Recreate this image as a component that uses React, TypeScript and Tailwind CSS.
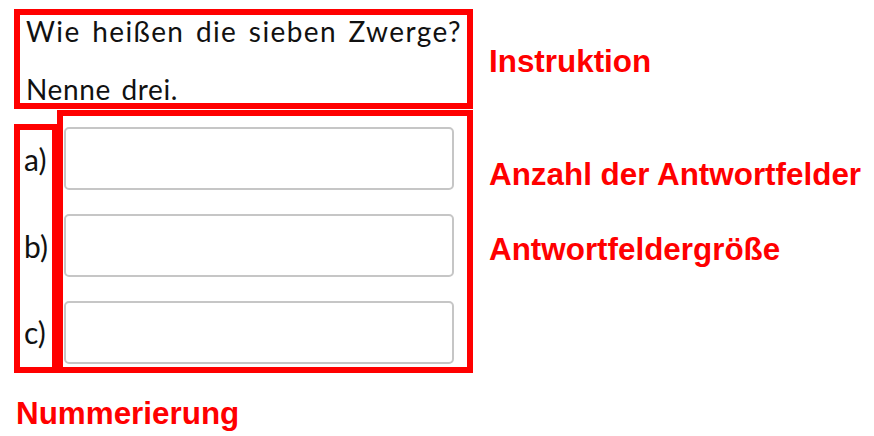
export default function App() {
  const rows = ["a)", "b)", "c)"];
  return (
    <div className="w-[874px] h-[436px] bg-white pl-[14px] pt-[9px] overflow-hidden">
      <div className="flex">
        <div className="w-[459px] flex flex-col">
          <div className="h-[100px] border-[6px] border-[#ff0000] pl-[6px] pt-[2px] text-[28px] leading-[28px] text-[#111111] whitespace-nowrap" style={{ fontFamily: "Lato, 'Noto Sans', sans-serif" }}>
            <p className="tracking-[1.4px] [word-spacing:3px]">Wie heißen die sieben Zwerge?</p>
            <p className="mt-[30px] tracking-[0.6px] [word-spacing:3px]">Nenne drei.</p>
          </div>
          <div className="flex items-end mt-[1px]">
            <div className="w-[44px] h-[249px] border-[6px] border-[#ff0000] flex flex-col justify-end gap-[24px] pb-[2px] pl-[4px] text-[30px] text-[#111111]" style={{ fontFamily: "Lato, 'Noto Sans', sans-serif" }}>
              {rows.map((r) => (
                <div key={r} className="h-[63px] flex items-center pb-[3px]">{r}</div>
              ))}
            </div>
            <div className="-ml-[1px] w-[416px] h-[263px] border-[6px] border-[#ff0000] pl-[1px] pt-[11px] flex flex-col gap-[24px]">
              {rows.map((r) => (
                <div key={r} className="w-[390px] h-[63px] border-2 border-[#c6c6c6] rounded-[5px] bg-white" />
              ))}
            </div>
          </div>
        </div>
        <div className="ml-[16px] flex flex-col text-[31.4px] leading-[31px] font-bold text-[#ff0000] whitespace-nowrap" style={{ fontFamily: "'Liberation Sans', Arial, sans-serif" }}>
          <div className="mt-[37px]">Instruktion</div>
          <div className="mt-[82px]">Anzahl der Antwortfelder</div>
          <div className="mt-[44px]">Antwortfeldergröße</div>
        </div>
      </div>
      <div className="mt-[25px] ml-[2px] text-[31.4px] leading-[31px] font-bold text-[#ff0000]" style={{ fontFamily: "'Liberation Sans', Arial, sans-serif" }}>
        Nummerierung
      </div>
    </div>
  );
}
